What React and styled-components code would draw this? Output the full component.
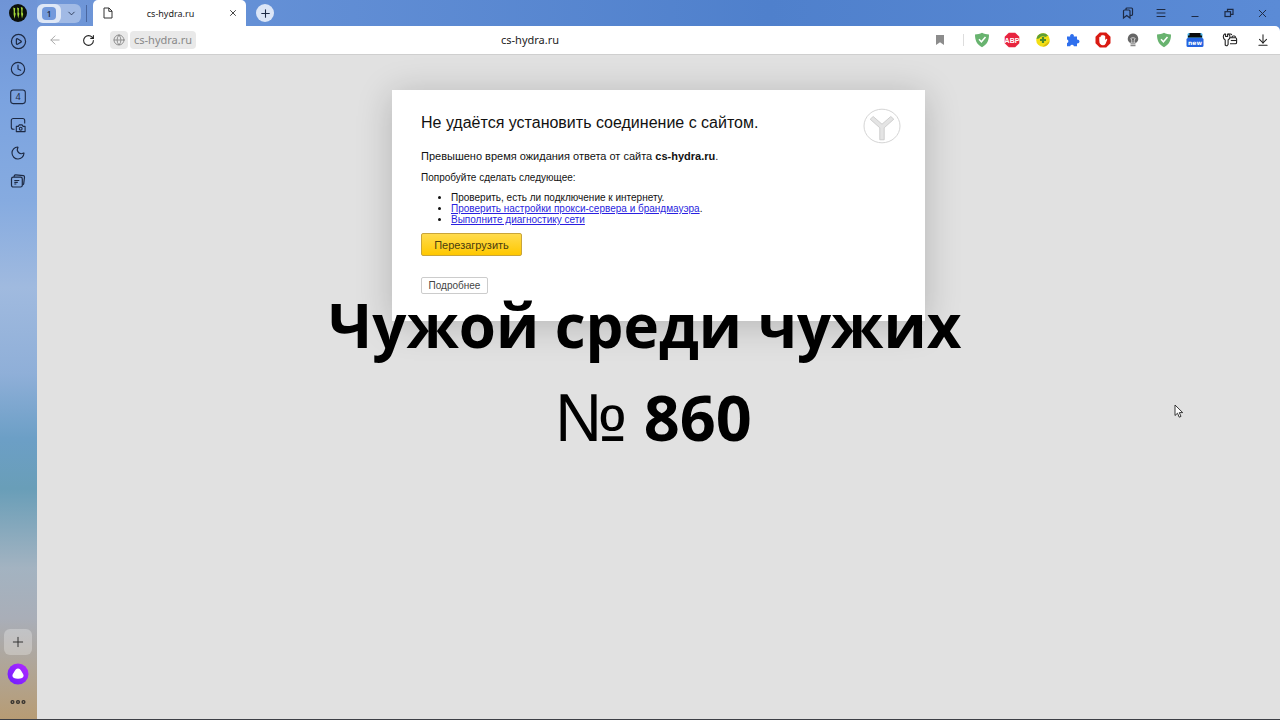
import styled, { createGlobalStyle } from 'styled-components';
import {
    ArrowDownToLine,
    ArrowLeft,
    ChevronDown,
    CirclePlay,
    Clock,
    Globe,
    Menu,
    Moon,
    Plus,
    RotateCw,
    X,
} from 'lucide-react';

const fonts = {
    ui: '"Noto Sans", "Open Sans", sans-serif',
    page: '"Liberation Sans", Arial, sans-serif',
    caption: '"Open Sans", "Noto Sans", sans-serif',
};

const GlobalStyle = createGlobalStyle`
    * {
        box-sizing: border-box;
    }

    body {
        margin: 0;
        overflow: hidden;
    }

    button {
        padding: 0;
        border: none;
        background: none;
        color: inherit;
        font: inherit;
        cursor: pointer;
    }

    svg {
        display: block;
        flex: none;
    }
`;

const Window = styled.div`
    position: relative;
    display: flex;
    height: 100vh;
    border-bottom: 1px solid #3c3f45;
    background: linear-gradient(90deg, #7398d8 0%, #6490d6 20%, #4f80cc 60%, #5b8bd6 100%);
    font-family: ${fonts.ui};
    color: #1d2a44;
`;

const Sidebar = styled.nav`
    width: 37px;
    flex: none;
    display: flex;
    flex-direction: column;
    align-items: center;
    justify-content: space-between;
    padding: 4px 1px 8px 0;
    background: linear-gradient(
        180deg,
        #6f94d6 0%,
        #7ba3e0 14%,
        #86abe0 28%,
        #a0badf 40%,
        #8fafd8 52%,
        #6c9fc6 61%,
        #699eb8 68%,
        #a3b3c1 79%,
        #a9aeb8 86%,
        #b0a596 93%,
        #b79c74 100%
    );
`;

const SideGroup = styled.div`
    display: flex;
    flex-direction: column;
    align-items: center;
    gap: ${(props) => props.$gap};
`;

const SideButton = styled.button`
    width: 18px;
    height: 18px;
    display: flex;
    align-items: center;
    justify-content: center;
    font-size: 9px;
`;

const AddButton = styled.button`
    width: 28px;
    height: 26px;
    display: flex;
    align-items: center;
    justify-content: center;
    border-radius: 6px;
    background: rgba(255, 255, 255, 0.28);
`;

const Main = styled.div`
    flex: 1;
    min-width: 0;
    display: flex;
    flex-direction: column;
`;

const TabBar = styled.header`
    height: 26px;
    flex: none;
    display: flex;
    align-items: center;
    padding-right: 11px;
`;

const Workspaces = styled.div`
    width: 44px;
    height: 19px;
    display: flex;
    align-items: center;
    border-radius: 6px;
    background: rgba(255, 255, 255, 0.35);
`;

const Workspace = styled.button`
    width: 24px;
    height: 19px;
    display: flex;
    align-items: center;
    justify-content: center;
    border-radius: 6px;
    background: rgba(255, 255, 255, 0.65);
`;

const WorkspaceNumber = styled.span`
    width: 14px;
    height: 13px;
    border-radius: 4px;
    background: #7299dc;
    font-size: 8px;
    font-weight: 600;
    line-height: 13px;
    text-align: center;
`;

const WorkspaceMenu = styled.button`
    flex: 1;
    display: flex;
    justify-content: center;
`;

const BarDivider = styled.span`
    width: 1px;
    height: 17px;
    margin: 0 6px 0 5px;
    background: #4a67a0;
`;

const Tab = styled.div`
    width: 153px;
    height: 26px;
    display: flex;
    align-items: center;
    justify-content: space-between;
    padding: 0 8px 0 10px;
    border-radius: 5px 5px 0 0;
    background: #fff;
    color: #222;
    font-size: 9px;
`;

const NewTab = styled.button`
    width: 18px;
    height: 18px;
    margin-left: 10px;
    display: flex;
    align-items: center;
    justify-content: center;
    border-radius: 50%;
    background: #dce6f7;
`;

const WindowControls = styled.div`
    width: 148px;
    margin-left: auto;
    display: flex;
    justify-content: space-between;
`;

const Toolbar = styled.div`
    height: 29px;
    flex: none;
    display: flex;
    align-items: center;
    padding: 0 10px 0 11px;
    border-bottom: 1px solid #cfcfcf;
    border-radius: 5px 5px 0 0;
    background: #fff;
    color: #222;
    font-size: 11px;
`;

const ToolButton = styled.button`
    display: flex;
    color: ${(props) => props.$color || '#222'};
    margin-right: ${(props) => props.$gap || '0'};
`;

const SiteIcon = styled.button`
    width: 18px;
    height: 18px;
    margin-right: 2px;
    display: flex;
    align-items: center;
    justify-content: center;
    border-radius: 4px;
    background: #e9e9e9;
    color: #888;
`;

const Host = styled.a`
    height: 18px;
    padding: 0 4px;
    border-radius: 4px;
    background: #e9e9e9;
    color: #888;
    line-height: 17px;
    text-decoration: none;
`;

const PageTitle = styled.div`
    flex: 1;
    padding: 0 72px 2px 0;
    text-align: center;
`;

const ToolDivider = styled.span`
    width: 1px;
    height: 12px;
    margin: 0 10px 0 19px;
    background: #ddd;
`;

const Extensions = styled.div`
    width: 230px;
    margin-right: 18px;
    display: flex;
    justify-content: space-between;
`;

const Page = styled.main`
    flex: 1;
    padding: 35px 20px;
    background: #e1e1e1;
    font-family: ${fonts.page};
`;

const Card = styled.section`
    max-width: 533px;
    min-height: 231px;
    margin: 0 auto;
    padding: 22px 29px;
    background: #fff;
    box-shadow: 0 4px 34px rgba(0, 0, 0, 0.2);
    color: #111;
    font-size: 10px;
`;

const CardHeader = styled.div`
    display: flex;
    justify-content: space-between;
`;

const Title = styled.h1`
    margin: 0;
    font-size: 16px;
    font-weight: normal;
    line-height: 21px;
`;

const LogoSlot = styled.div`
    height: 21px;
    margin: -4px -5px 0 0;
`;

const Reason = styled.p`
    margin: 16px 0 0;
    font-size: 11px;
    line-height: 14px;
`;

const Hint = styled.p`
    margin: 9px 0 0;
    line-height: 12px;
`;

const Steps = styled.ul`
    margin: 8px 0 0;
    padding-left: 30px;
    line-height: 11px;
`;

const StepLink = styled.a`
    color: #2a1fe0;
`;

const ReloadButton = styled.button`
    display: block;
    width: 101px;
    height: 23px;
    margin-top: 8px;
    border: 1px solid #c9a53a;
    border-radius: 2px;
    background: linear-gradient(#ffdb4d, #ffc800);
    color: #4a3d10;
    font-size: 11px;
`;

const DetailsButton = styled.button`
    display: block;
    width: 67px;
    height: 17px;
    margin-top: 21px;
    border: 1px solid #ccc;
    border-radius: 2px;
    background: #fff;
    color: #444;
`;

const Caption = styled.div`
    position: absolute;
    top: 280px;
    left: 10px;
    right: 0;
    color: #000;
    font-family: ${fonts.caption};
    font-size: 60px;
    font-weight: 700;
    line-height: 91px;
    text-align: center;
    pointer-events: none;
`;

const NumberLine = styled.div`
    font-size: 63px;
`;

const NumberSign = styled.span`
    font-family: 'Liberation Sans', sans-serif;
    font-size: 68px;
    font-weight: 400;
    line-height: 1;
`;

const Cursor = styled.svg`
    position: absolute;
    top: 404px;
    left: 1174px;
    pointer-events: none;
`;

function ProfileIcon() {
    return (
        <svg width='18' height='18' viewBox='0 0 18 18'>
            <circle cx='9' cy='9' r='9' fill='#0b0f0b' />
            <path
                d='M4.200 3.500l2 .8-.3 4 .8 1.500-1.200 5-.9-4.600.1-3.200zM8 3.500l2 .8-.4 4 .8 1.500-1.200 4.800-.9-4.600.3-3zM11.800 3l2 .8-.4 4.500.8 1.700-1.200 4.500-.9-4.600.3-3z'
                fill='#a6d93a'
            />
        </svg>
    );
}

function TabsCountIcon() {
    return (
        <svg width='16' height='16' viewBox='0 0 16 16' fill='none'>
            <rect x='.7' y='1' width='14.6' height='13.6' rx='2.500' stroke='currentColor' strokeWidth='1.1' />
            <text x='8' y='11' fontSize='9' textAnchor='middle' fill='currentColor'>
                4
            </text>
        </svg>
    );
}

function ScreenshotIcon() {
    return (
        <svg
            width='16'
            height='16'
            viewBox='0 0 16 16'
            fill='none'
            stroke='currentColor'
            strokeWidth='1.1'>
            <path d='M4.500 12.200H3.300a2 2 0 0 1-2-2V3.500a2 2 0 0 1 2-2h9.400a2 2 0 0 1 2 2v3' />
            <path d='M6.300 9.400h2l1-1.500h2.800l1 1.500h2v5.200H6.300z' strokeLinejoin='round' />
            <circle cx='10.700' cy='11.700' r='1.400' />
        </svg>
    );
}

function NotesIcon() {
    return (
        <svg
            width='16'
            height='16'
            viewBox='0 0 16 16'
            fill='none'
            stroke='currentColor'
            strokeWidth='1.2'>
            <path d='M4 4l.3-1.300q.4-1 1.500-.9l7.600.9q1.300.2 1.100 1.500l-.8 6.600q-.2 1-1.400 1' />
            <rect x='1.500' y='4.200' width='10.800' height='9.800' rx='1.800' />
            <path d='M4.300 7.500h5M4.300 9.300h3.500M4.300 11h2' />
        </svg>
    );
}

function AliceIcon() {
    return (
        <svg width='22' height='22' viewBox='0 0 22 22'>
            <defs>
                <linearGradient id='alice' x1='0' y1='1' x2='1' y2='0'>
                    <stop offset='0' stopColor='#6a1cff' />
                    <stop offset='1' stopColor='#b62bff' />
                </linearGradient>
            </defs>
            <circle cx='11' cy='11' r='10.500' fill='url(#alice)' />
            <path
                d='M11 5.500c1.600 0 2.500 1 3.600 2.900 1.300 2.200 2 3.300 2 4.400 0 2-2.300 3-5.600 3s-5.600-1-5.600-3c0-1.100.7-2.200 2-4.400C8.500 6.500 9.400 5.500 11 5.500z'
                fill='#fff'
            />
        </svg>
    );
}

function DotsIcon() {
    return (
        <svg width='16' height='6' viewBox='0 0 16 6' fill='none' stroke='#33302c' strokeWidth='1.3'>
            <circle cx='2.500' cy='3' r='1.400' />
            <circle cx='8' cy='3' r='1.400' />
            <circle cx='13.500' cy='3' r='1.400' />
        </svg>
    );
}

function FileIcon() {
    return (
        <svg width='10' height='12' viewBox='0 0 10 12' fill='none' stroke='#333'>
            <path d='M1 1h5l3 3v7H1z' />
            <path d='M5.800 1v3.300H9' />
        </svg>
    );
}

function CollectionsIcon() {
    return (
        <svg width='14' height='14' viewBox='0 0 14 14' fill='none' stroke='currentColor' strokeWidth='1.2'>
            <path d='M5 4V3q0-1 1-1h4.500q1 0 1 1v5.500q0 .8-.8.8H9' />
            <path d='M2.500 5q0-1 1-1H8q1 0 1 1v7L5.700 9.600 2.500 12z' />
        </svg>
    );
}

function RestoreIcon() {
    return (
        <svg width='14' height='14' viewBox='0 0 14 14' fill='none' stroke='currentColor' strokeWidth='1.2'>
            <path d='M5.500 5.500V3.300h5.500v5H8.600' />
            <rect x='3' y='5.700' width='5.500' height='4.800' />
        </svg>
    );
}

function BookmarkIcon() {
    return (
        <svg width='8' height='10' viewBox='0 0 8 10'>
            <path d='M0 0h8v10L4 7.200 0 10z' fill='#8c8c8c' />
        </svg>
    );
}

function ShieldIcon() {
    return (
        <svg width='16' height='16' viewBox='0 0 16 16'>
            <path d='M8 .8c2 1 4.500 1.500 7 1.600 0 6-1.600 9.600-7 12.800C2.600 12 1 8.400 1 2.400 3.500 2.300 6 1.800 8 .8z' fill='#68b36f' />
            <path d='M5 7.300l2.400 2.500L11.500 5' fill='none' stroke='#fff' strokeWidth='1.500' />
        </svg>
    );
}

function AdblockIcon() {
    return (
        <svg width='16' height='16' viewBox='0 0 16 16'>
            <path d='M4.800.7h6.400l4.100 4.100v6.400l-4.100 4.100H4.800L.7 11.200V4.800z' fill='#e8243f' />
            <text
                x='8'
                y='10.600'
                fontSize='7'
                fontWeight='bold'
                fontFamily='Liberation Sans, sans-serif'
                textAnchor='middle'
                fill='#fff'>
                ABP
            </text>
        </svg>
    );
}

function CoinIcon() {
    return (
        <svg width='16' height='16' viewBox='0 0 16 16'>
            <circle cx='8' cy='8' r='6.800' fill='#f3df14' />
            <path d='M1.500 7A6.600 6.600 0 0 1 13 3.500L10.500 5A5 5 0 0 0 4 6.500z' fill='#5f9f35' />
            <path d='M14.500 9a6.600 6.600 0 0 1-7 5.600L12 11z' fill='#d9b90c' />
            <path d='M8 5v6M5 8h6' stroke='#4c8a2c' strokeWidth='2.200' />
        </svg>
    );
}

function PuzzleIcon() {
    return (
        <svg width='16' height='16' viewBox='0 0 16 16'>
            <path
                d='M2 4.500h3.200a1.900 1.900 0 1 1 3.600 0H12v3.200a1.900 1.900 0 1 1 0 3.600v3H8.900a1.900 1.900 0 0 0-3.700 0H2V11a1.800 1.800 0 0 0 0-3.500z'
                fill='#2f6fed'
            />
        </svg>
    );
}

function HandIcon() {
    return (
        <svg width='16' height='16' viewBox='0 0 16 16'>
            <path d='M4.800.5h6.400l4.300 4.300v6.400l-4.300 4.300H4.800L.5 11.200V4.800z' fill='#d91a12' />
            <path
                d='M4.300 8.500V5.200q.7-.8 1.400 0V3.800q.8-.9 1.500 0v-.6q.8-.8 1.500 0v.6q.8-.7 1.500.2V8l1-1.100q1.200-.3 1 .8l-1.600 4Q9.700 13.200 8 13.200q-3.700 0-3.700-4.700z'
                fill='#fff'
            />
        </svg>
    );
}

function BulbIcon() {
    return (
        <svg width='16' height='16' viewBox='0 0 16 16'>
            <path d='M8 1.500a5.200 5.200 0 0 1 3.200 9.300H4.800A5.200 5.200 0 0 1 8 1.500z' fill='#666' />
            <path d='M6.800 11V8L5.700 6.600l1.300-.8h2l1.300.8L9.200 8v3' fill='none' stroke='#ddd' strokeWidth='.9' />
            <path d='M5.500 11.800h5M5.500 13.700h5' stroke='#888' strokeWidth='1.200' />
        </svg>
    );
}

function NewIcon() {
    return (
        <svg width='18' height='16' viewBox='0 0 18 16'>
            <rect x='1.500' y='1' width='15' height='6' rx='1.500' fill='#49b4e8' />
            <path d='M3.500 1h11v2.500h1.500v2H2v-2h1.500z' fill='#0a0a0a' />
            <rect x='.5' y='6' width='17' height='9' rx='1.500' fill='#2463e0' />
            <text
                x='9'
                y='12.800'
                fontSize='6'
                fontWeight='bold'
                fontFamily='DejaVu Sans, sans-serif'
                textAnchor='middle'
                fill='#fff'>
                new
            </text>
        </svg>
    );
}

function KeysIcon() {
    return (
        <svg
            width='16'
            height='16'
            viewBox='0 0 16 16'
            fill='none'
            stroke='#222'
            strokeWidth='1.1'
            strokeLinejoin='round'>
            <path d='M3.200 13V8Q1.300 7 1.300 4.800 1.300 3 2.600 2h1v2.500h2V2h1Q8 3 8 4.800 8 7 6.100 8v4.500l-1 1.200H4z' />
            <path d='M6.600 2h1.800q1 0 1.300 1' />
            <path d='M10 5.800V5q0-1 1-1h1.400q1 0 1 1v.8' />
            <path d='M8 5.800h5.300q1.300 0 1.300 1.300v3.400q0 1.300-1.300 1.300H8' />
            <path d='M8.800 8.500h5.700' />
        </svg>
    );
}

function YandexIcon() {
    return (
        <svg width='38' height='36' viewBox='0 0 38 36'>
            <ellipse cx='19' cy='18' rx='18' ry='16.800' fill='#fff' stroke='#d5d5d5' />
            <path
                d='M7.200 11.200l3-2.700 8.800 7.700 8.800-7.700 3 2.700-9.600 8.600v12h-4.400v-12z'
                fill='#e4e4e4'
                stroke='#cbcbcb'
                strokeWidth='.9'
            />
        </svg>
    );
}

const sideItems = [
    { label: 'Профиль', icon: <ProfileIcon /> },
    { label: 'Видео', icon: <CirclePlay size={17} strokeWidth={1.7} /> },
    { label: 'История', icon: <Clock size={16} strokeWidth={1.7} /> },
    { label: 'Вкладки', icon: <TabsCountIcon /> },
    { label: 'Скриншот', icon: <ScreenshotIcon /> },
    { label: 'Тема', icon: <Moon size={16} strokeWidth={1.7} /> },
    { label: 'Заметки', icon: <NotesIcon /> },
];

const windowItems = [
    { label: 'Коллекции', icon: <CollectionsIcon /> },
    { label: 'Меню', icon: <Menu size={12} strokeWidth={2} /> },
    {
        label: 'Свернуть',
        icon: (
            <svg width='14' height='14' viewBox='0 0 14 14' stroke='currentColor'>
                <path d='M3.500 10.500h7' />
            </svg>
        ),
    },
    { label: 'Развернуть', icon: <RestoreIcon /> },
    { label: 'Закрыть', icon: <X size={13} strokeWidth={1.8} /> },
];

const extensions = [
    { label: 'AdGuard', icon: <ShieldIcon /> },
    { label: 'Adblock Plus', icon: <AdblockIcon /> },
    { label: 'Бонусы', icon: <CoinIcon /> },
    { label: 'Дополнения', icon: <PuzzleIcon /> },
    { label: 'AdBlock', icon: <HandIcon /> },
    { label: 'Подсветка', icon: <BulbIcon /> },
    { label: 'Защита', icon: <ShieldIcon /> },
    { label: 'Новое', icon: <NewIcon /> },
];

function App() {
    return (
        <>
            <GlobalStyle />
            <Window>
                <Sidebar>
                    <SideGroup $gap='10px'>
                        {sideItems.map((item) => (
                            <SideButton key={item.label} aria-label={item.label}>
                                {item.icon}
                            </SideButton>
                        ))}
                    </SideGroup>
                    <SideGroup $gap='8px'>
                        <AddButton aria-label='Добавить'>
                            <Plus size={16} strokeWidth={1.5} color='#333' />
                        </AddButton>
                        <button aria-label='Алиса'>
                            <AliceIcon />
                        </button>
                        <SideButton aria-label='Ещё'>
                            <DotsIcon />
                        </SideButton>
                    </SideGroup>
                </Sidebar>
                <Main>
                    <TabBar>
                        <Workspaces>
                            <Workspace aria-label='Группа 1'>
                                <WorkspaceNumber>1</WorkspaceNumber>
                            </Workspace>
                            <WorkspaceMenu aria-label='Группы'>
                                <ChevronDown size={11} strokeWidth={1.8} />
                            </WorkspaceMenu>
                        </Workspaces>
                        <BarDivider />
                        <Tab>
                            <FileIcon />
                            <span>cs-hydra.ru</span>
                            <button aria-label='Закрыть вкладку'>
                                <X size={10} strokeWidth={2} />
                            </button>
                        </Tab>
                        <NewTab aria-label='Новая вкладка'>
                            <Plus size={13} strokeWidth={2} />
                        </NewTab>
                        <WindowControls>
                            {windowItems.map((item) => (
                                <button key={item.label} aria-label={item.label}>
                                    {item.icon}
                                </button>
                            ))}
                        </WindowControls>
                    </TabBar>
                    <Toolbar>
                        <ToolButton aria-label='Назад' $color='#aaa' $gap='20px'>
                            <ArrowLeft size={14} strokeWidth={1.7} />
                        </ToolButton>
                        <ToolButton aria-label='Обновить' $gap='15px'>
                            <RotateCw size={13} strokeWidth={2} />
                        </ToolButton>
                        <SiteIcon aria-label='О сайте'>
                            <Globe size={12} strokeWidth={1.8} />
                        </SiteIcon>
                        <Host href='#'>cs-hydra.ru</Host>
                        <PageTitle>cs-hydra.ru</PageTitle>
                        <ToolButton aria-label='В закладки'>
                            <BookmarkIcon />
                        </ToolButton>
                        <ToolDivider />
                        <Extensions>
                            {extensions.map((item) => (
                                <ToolButton key={item.label} aria-label={item.label}>
                                    {item.icon}
                                </ToolButton>
                            ))}
                        </Extensions>
                        <ToolButton aria-label='Пароли' $gap='18px'>
                            <KeysIcon />
                        </ToolButton>
                        <ToolButton aria-label='Загрузки'>
                            <ArrowDownToLine size={14} strokeWidth={1.8} />
                        </ToolButton>
                    </Toolbar>
                    <Page>
                        <Card>
                            <CardHeader>
                                <Title>Не удаётся установить соединение с сайтом.</Title>
                                <LogoSlot>
                                    <YandexIcon />
                                </LogoSlot>
                            </CardHeader>
                            <Reason>
                                Превышено время ожидания ответа от сайта <b>cs-hydra.ru</b>.
                            </Reason>
                            <Hint>Попробуйте сделать следующее:</Hint>
                            <Steps>
                                <li>Проверить, есть ли подключение к интернету.</li>
                                <li>
                                    <StepLink href='#'>
                                        Проверить настройки прокси-сервера и брандмауэра
                                    </StepLink>
                                    .
                                </li>
                                <li>
                                    <StepLink href='#'>Выполните диагностику сети</StepLink>
                                </li>
                            </Steps>
                            <ReloadButton>Перезагрузить</ReloadButton>
                            <DetailsButton>Подробнее</DetailsButton>
                        </Card>
                    </Page>
                </Main>
                <Caption>
                    <div>Чужой среди чужих</div>
                    <NumberLine>
                        &nbsp;<NumberSign>№</NumberSign> 860
                    </NumberLine>
                </Caption>
                <Cursor width='10' height='15' viewBox='0 0 10 15'>
                    <path
                        d='M1 1v10.500l2.500-2.300 1.700 4 1.800-.8-1.700-3.800h3.400z'
                        fill='#fff'
                        stroke='#222'
                        strokeWidth='.9'
                    />
                </Cursor>
            </Window>
        </>
    );
}

export default App;
